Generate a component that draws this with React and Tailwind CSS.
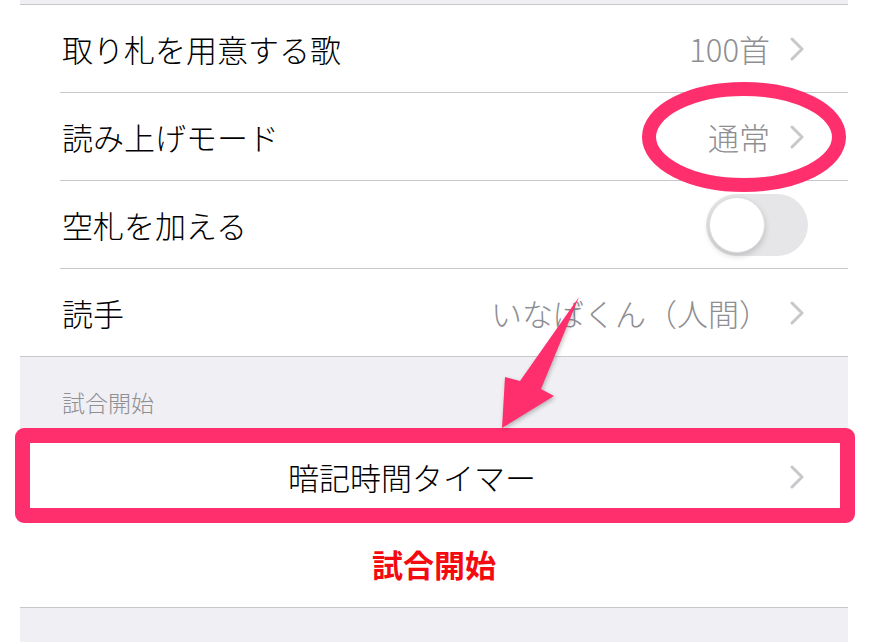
import React from "react";

const font = { fontFamily: '"Noto Sans CJK JP", "Noto Sans", sans-serif' };

function Chevron() {
  return (
    <svg width="14" height="24" viewBox="0 0 14 24" className="shrink-0">
      <polyline points="2,2 12,12 2,22" fill="none" stroke="#c7c7cc" strokeWidth="3" strokeLinecap="round" strokeLinejoin="round" />
    </svg>
  );
}

function Row({ label, value, last, children }) {
  return (
    <div className={`flex h-[88px] bg-white ${last ? "border-b border-[#c8c7cc]" : "pl-[40px]"}`}>
      <div
        className={`flex-1 flex items-center h-full pr-[44px] ${
          last ? "pl-[42px]" : "pl-[2px] border-b border-[#c8c7cc]"
        }`}
      >
        <span className="flex-1 text-[31px] font-light text-black leading-none">{label}</span>
        {children ? (
          children
        ) : (
          <div className="flex items-center gap-[20px]">
            <span className="text-[31px] font-light text-[#8e8e93] leading-none">{value}</span>
            <Chevron />
          </div>
        )}
      </div>
    </div>
  );
}

function Toggle() {
  return (
    <div className="w-[102px] h-[62px] rounded-full bg-[#e6e6e9] p-[3px] -mr-[4px] flex items-center">
      <div className="w-[56px] h-[56px] rounded-full bg-white shadow-[0_3px_6px_rgba(0,0,0,0.18)] border border-[#dedede]" />
    </div>
  );
}

export default function App() {
  return (
    <div className="relative w-[871px] h-[642px] overflow-hidden bg-white" style={font}>
      <div className="ml-[20px] w-[828px] h-full flex flex-col bg-[#efeff4]">
        <div className="h-[5px] border-b border-[#c8c7cc]" />
        <Row label="取り札を用意する歌" value="100首" />
        <Row label="読み上げモード" value="通常" />
        <Row label="空札を加える">
          <Toggle />
        </Row>
        <Row label="読手" value="いなばくん（人間）" last />

        {/* section header */}
        <div className="h-[75px] flex items-end pl-[42px] pb-[18px]">
          <span className="text-[23px] font-light text-[#8e8e93] leading-none">試合開始</span>
        </div>

        <div className="h-[88px] bg-white border-t border-[#c8c7cc] flex items-center pr-[44px]">
          <span className="flex-1 text-center pl-[14px] text-[31px] font-light text-black leading-none">暗記時間タイマー</span>
          <Chevron />
        </div>
        <div className="h-[88px] bg-white border-b border-[#c8c7cc] flex items-center justify-center">
          <span className="text-[31px] font-bold text-[#f40b10] leading-none">試合開始</span>
        </div>
        <div className="flex-1" />
      </div>

      {/* annotations */}
      <div className="absolute left-[15px] top-[428px] w-[840px] h-[95px] border-[15px] border-[#ff2f6d] rounded-[9px]" />
      <svg className="absolute left-0 top-0 pointer-events-none" width="871" height="642">
        <ellipse cx="744" cy="137" rx="95" ry="48" fill="none" stroke="#ff2f6d" strokeWidth="14" />
        <polygon
          points="579,297 541,389 554,396 502,428 505,377 520,381"
          fill="#ff2f6d"
          style={{ filter: "drop-shadow(1px 2px 2px rgba(0,0,0,0.25))" }}
        />
      </svg>
    </div>
  );
}
